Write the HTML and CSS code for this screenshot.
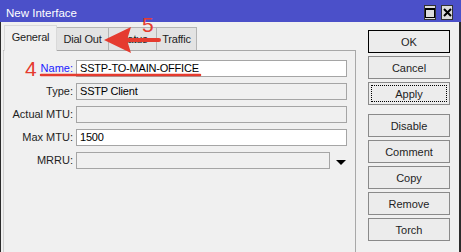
FILE: index.html
```html
<!DOCTYPE html>
<html lang="en">
<head>
    <meta charset="UTF-8">
    <title>New Interface</title>
    <link rel="stylesheet" href="styles.css">
</head>
<body>
    <div class="window">
        <div class="titlebar">
            <span class="title">New Interface</span>
            <div class="title-buttons">
                <div class="title-btn">
                    <svg width="10" height="10" viewBox="0 0 10 10"><rect x="0.5" y="0.5" width="9" height="9" fill="none" stroke="#000"/><rect x="0" y="0" width="10" height="2" fill="#000"/></svg>
                </div>
                <div class="title-btn">
                    <svg width="9" height="9" viewBox="0 0 9 9"><path d="M1 1 L8 8 M8 1 L1 8" stroke="#000" stroke-width="2"/></svg>
                </div>
            </div>
        </div>

        <div class="client">
            <div class="main">
                <div class="tabs">
                    <div class="tab active tab-general">General</div>
                    <div class="tab tab-dial">Dial Out</div>
                    <div class="tab tab-status">Status</div>
                    <div class="tab tab-traffic">Traffic</div>
                </div>
                <div class="panel">
                    <div class="form">
                        <div class="label link">Name:</div>
                        <div class="cell"><div class="field">SSTP-TO-MAIN-OFFICE</div></div>

                        <div class="label">Type:</div>
                        <div class="cell"><div class="field disabled">SSTP Client</div></div>

                        <div class="label">Actual MTU:</div>
                        <div class="cell"><div class="field disabled"></div></div>

                        <div class="label">Max MTU:</div>
                        <div class="cell"><div class="field">1500</div></div>

                        <div class="label">MRRU:</div>
                        <div class="cell">
                            <div class="field disabled short"></div>
                            <span class="drop-arrow"></span>
                        </div>
                    </div>
                </div>
            </div>

            <div class="actions">
                <button class="btn default">OK</button>
                <button class="btn">Cancel</button>
                <button class="btn focus">Apply</button>
                <button class="btn spaced">Disable</button>
                <button class="btn">Comment</button>
                <button class="btn">Copy</button>
                <button class="btn">Remove</button>
                <button class="btn">Torch</button>
            </div>
        </div>

        <!-- annotation overlay -->
        <span class="mark mark-5">5</span>
        <span class="mark mark-4">4</span>
        <svg class="overlay" width="461" height="252" viewBox="0 0 461 252">
            <line x1="10" y1="45" x2="55" y2="45" stroke="#e53b2f" stroke-width="2.5" stroke-linecap="round"/>
            <line x1="41" y1="75" x2="200" y2="75" stroke="#e53b2f" stroke-width="2.5" stroke-linecap="round"/>
            <rect x="124" y="38" width="37" height="4" rx="2" fill="#e53b2f"/>
            <path d="M104 40 L131 27 L127 40 L131 53 Z" fill="#e53b2f"/>
        </svg>
    </div>
</body>
</html>
```

FILE: styles.css
```css
* {
    box-sizing: border-box;
    margin: 0;
    padding: 0;
}

body {
    font-family: "Liberation Sans", Arial, sans-serif;
    font-size: 11px;
    color: #1e1e1e;
    background: #f0f0f0;
    width: 461px;
    height: 252px;
    overflow: hidden;
}

.window {
    position: relative;
    width: 461px;
    height: 252px;
    background: #f0f0f0;
}

.titlebar {
    display: flex;
    height: 22px;
    background: #4b50c9;
    color: #fff;
    padding-left: 6px;
}

.title {
    font-size: 11.5px;
    line-height: 18px;
    padding-top: 4px;
}

.title-buttons {
    display: flex;
    gap: 5px;
    margin-left: auto;
    margin-right: 8px;
    margin-top: 5px;
}

.title-btn {
    width: 12px;
    height: 15px;
    background: #dcdcdc;
    border: 1px solid #333;
    display: flex;
    align-items: center;
    justify-content: center;
}

.client {
    display: flex;
    height: 230px;
    border-left: 1px solid #2b2b2b;
    border-right: 2px solid #2b2b2b;
    padding-left: 2px;
}

.main {
    width: 353px;
    display: flex;
    flex-direction: column;
}

.tabs {
    display: flex;
    align-items: flex-end;
    height: 28px;
    padding-left: 1px;
}

.tab {
    height: 23px;
    line-height: 22px;
    text-align: center;
    letter-spacing: -0.2px;
    background: #e3e3e3;
    border: 1px solid #b4b4b4;
    border-bottom: none;
    margin-left: -1px;
    color: #1e1e1e;
}

.tab-general {
    width: 53px;
    margin-left: 0;
}

.tab-dial {
    width: 53px;
}

.tab-status {
    width: 49px;
}

.tab-traffic {
    width: 41px;
}

.tab.active {
    position: relative;
    z-index: 1;
    height: 26px;
    margin-bottom: -1px;
    background: #f0f0f0;
    border-color: #d9d9d9;
}

.panel {
    flex: 1;
    border: 1px solid #a8a8a8;
    border-left-color: #d0d0d0;
    border-bottom: none;
    padding-top: 9px;
}

.form {
    display: grid;
    grid-template-columns: 69px 1fr;
    column-gap: 3px;
    row-gap: 6px;
}

.label {
    text-align: right;
    line-height: 17px;
    color: #1e1e1e;
}

.label.link {
    color: #1a1aff;
}

.cell {
    display: flex;
    align-items: center;
}

.field {
    width: 271px;
    height: 17px;
    line-height: 15px;
    padding-left: 3px;
    background: #fff;
    border: 1px solid #a5a5a5;
    color: #000;
    white-space: nowrap;
    letter-spacing: -0.2px;
}

.field.disabled {
    background: #f0f0f0;
}

.field.short {
    width: 254px;
}

.drop-arrow {
    width: 0;
    height: 0;
    margin-left: 6px;
    margin-top: 3px;
    border-left: 5px solid transparent;
    border-right: 5px solid transparent;
    border-top: 5px solid #000;
}

.actions {
    display: flex;
    flex-direction: column;
    gap: 3px;
    width: 82px;
    margin-left: 12px;
    padding-top: 8px;
}

.btn {
    height: 23px;
    font-family: inherit;
    font-size: 11px;
    color: #1e1e1e;
    background: #ececec;
    border: 1px solid #8a8a8a;
}

.btn.default {
    border-color: #000;
}

.btn.focus {
    outline: 1px dotted #000;
    outline-offset: -4px;
}

.btn.spaced {
    margin-top: 6px;
}

.mark {
    position: absolute;
    font-size: 21px;
    line-height: 16px;
    color: #e53b2f;
}

.mark-5 {
    left: 142px;
    top: 17px;
}

.mark-4 {
    left: 25px;
    top: 61px;
}

.overlay {
    position: absolute;
    left: 0;
    top: 0;
    pointer-events: none;
}
```
